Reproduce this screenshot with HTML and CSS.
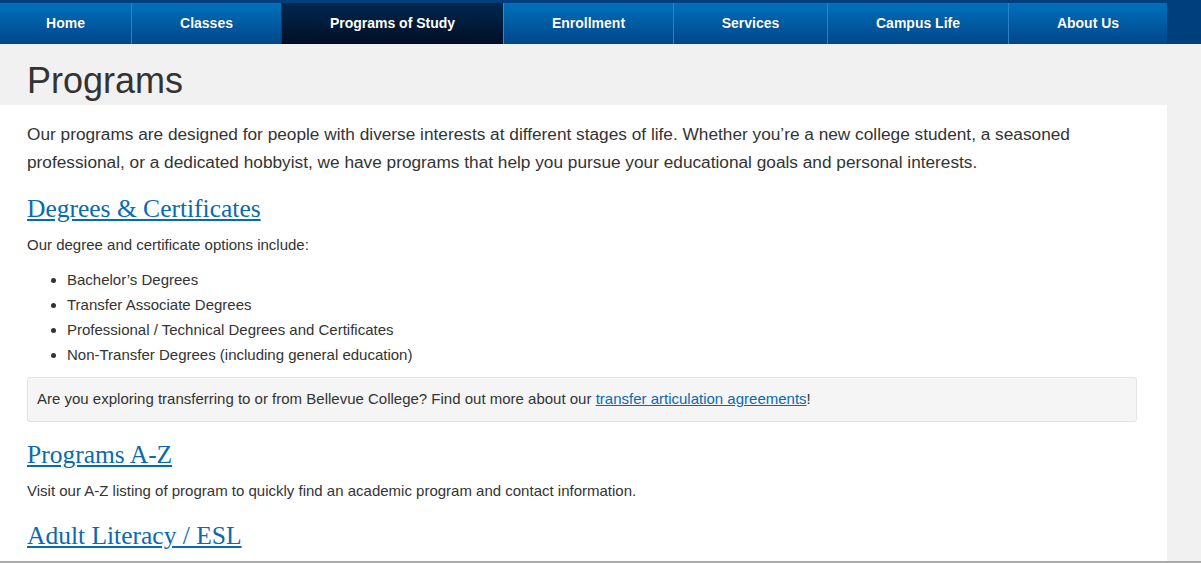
FILE: index.html
```html
<!DOCTYPE html>
<html lang="en">
<head>
<meta charset="utf-8">
<title>Programs</title>
<link rel="stylesheet" href="styles.css">
</head>
<body>
<header class="topbar">
  <nav class="nav">
    <a class="nav-item w-home" href="#">Home</a>
    <a class="nav-item w-classes" href="#">Classes</a>
    <a class="nav-item w-programs active" href="#">Programs of Study</a>
    <a class="nav-item w-enroll" href="#">Enrollment</a>
    <a class="nav-item w-services" href="#">Services</a>
    <a class="nav-item w-campus" href="#">Campus Life</a>
    <a class="nav-item w-about" href="#">About Us</a>
  </nav>
</header>
<div class="page">
  <h1 class="page-title">Programs</h1>
  <main class="content">
    <p class="lead">Our programs are designed for people with diverse interests at different stages of life. Whether you’re a new college student, a seasoned professional, or a dedicated hobbyist, we have programs that help you pursue your educational goals and personal interests.</p>
    <h2 class="section-title"><a href="#">Degrees &amp; Certificates</a></h2>
    <p class="text">Our degree and certificate options include:</p>
    <ul class="list">
      <li>Bachelor’s Degrees</li>
      <li>Transfer Associate Degrees</li>
      <li>Professional / Technical Degrees and Certificates</li>
      <li>Non-Transfer Degrees (including general education)</li>
    </ul>
    <div class="well">Are you exploring transferring to or from Bellevue College? Find out more about our <a href="#">transfer articulation agreements</a>!</div>
    <h2 class="section-title"><a href="#">Programs A-Z</a></h2>
    <p class="text text-spaced">Visit our A-Z listing of program to quickly find an academic program and contact information.</p>
    <h2 class="section-title"><a href="#">Adult Literacy / ESL</a></h2>
  </main>
</div>
<div class="bottom-edge"></div>
</body>
</html>
```
FILE: styles.css
```css
html, body {
  margin: 0;
  padding: 0;
}
body {
  background: #f1f1f1;
  font-family: "Liberation Sans", Arial, sans-serif;
  color: #333;
  overflow: hidden;
}
.topbar {
  background: #003f7e;
  padding-top: 3px;
  height: 41px;
}
.nav {
  display: flex;
  width: 1167px;
  height: 41px;
}
.nav-item {
  display: flex;
  align-items: center;
  justify-content: center;
  height: 41px;
  padding-bottom: 2px;
  color: #fff;
  font-weight: bold;
  font-size: 14px;
  text-decoration: none;
  background: linear-gradient(#0070bb, #00468a);
  border-left: 1px solid #2c82c6;
  box-sizing: border-box;
  text-shadow: 0 0 1px rgba(0,0,0,0.4);
}
.nav-item:first-child { border-left: none; }
.nav-item.active {
  background: linear-gradient(#00284f, #000f26);
  border-left: 1px solid #0a3a68;
}
.w-home { width: 131px; }
.w-classes { width: 150px; }
.w-programs { width: 222px; }
.w-enroll { width: 170px; border-left-color: #3a88c4 !important; }
.w-services { width: 154px; }
.w-campus { width: 181px; }
.w-about { width: 159px; }
.page {
  width: 1167px;
}
.page-title {
  margin: 0;
  padding: 17px 0 0 27px;
  height: 44px;
  font-size: 36px;
  font-weight: normal;
  line-height: 40px;
  color: #333;
}
.content {
  background: #fff;
  padding: 15px 30px 20px 27px;
}
.lead {
  margin: 0 0 18px;
  font-size: 17.25px;
  line-height: 28px;
}
.section-title {
  margin: 17px 0 10px;
  font-family: "Liberation Serif", "Times New Roman", serif;
  font-weight: normal;
  font-size: 25.5px;
  line-height: 30px;
}
.section-title a {
  color: #0a6aad;
  text-decoration: underline;
}
.text {
  margin: 0 0 12px;
  font-size: 15px;
  line-height: 21px;
}
.text-spaced {
  margin-bottom: 20px;
}
.list {
  margin: 0 0 10px;
  padding-left: 40px;
  font-size: 15px;
  line-height: 25px;
}
.well {
  background: #f5f5f5;
  border: 1px solid #e3e3e3;
  border-radius: 3px;
  padding: 11px 9px 12px;
  margin-bottom: 18px;
  font-size: 15px;
  line-height: 20px;
}
.well a {
  color: #0a6aad;
}
.bottom-edge {
  position: fixed;
  left: 0;
  right: 0;
  bottom: 0;
  height: 2px;
  background: #a9a9a9;
}
```
